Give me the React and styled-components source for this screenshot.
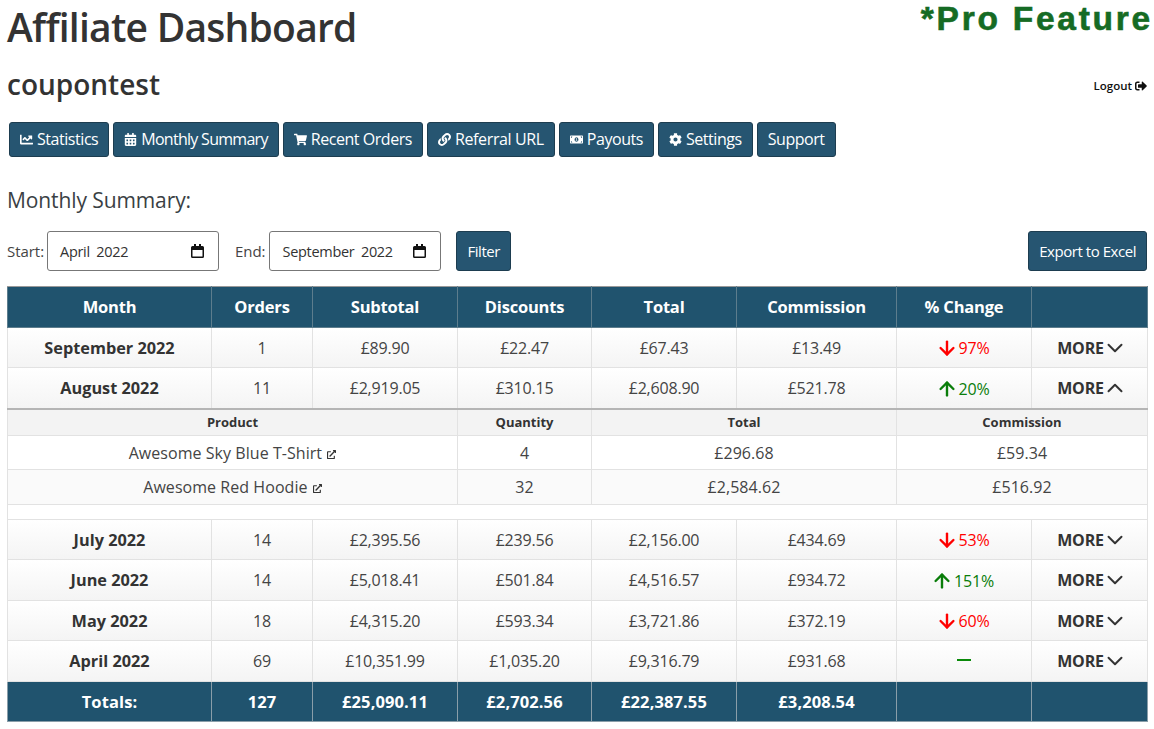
import React from "react";
import styled, { createGlobalStyle } from "styled-components";
import { FaChartLine, FaCalendarAlt, FaShoppingCart, FaLink, FaMoneyBillAlt, FaCog, FaSignOutAlt, FaExternalLinkAlt } from "react-icons/fa";
import { ArrowDown, ArrowUp, ChevronDown, ChevronUp } from "lucide-react";

const Global = createGlobalStyle`
  html, body { margin: 0; padding: 0; background: #fff; }
  body { font-family: "Open Sans", "Noto Sans", sans-serif; color: #333; font-size: 16px; }
  * { box-sizing: border-box; }
`;
const Page = styled.div`
  width: 1154px; height: 729px; overflow: hidden; padding: 0 7px;
`;
const TopRow = styled.div`
  display: flex; justify-content: space-between; align-items: flex-start; height: 63px;
`;
const Title = styled.h1`
  margin: 5px 0 0; font-size: 39px; line-height: 44px; font-weight: 600; letter-spacing: -0.76px; color: #333;
`;
const Pro = styled.div`
  font-family: "Liberation Sans", sans-serif; font-size: 33.5px; line-height: 37px; font-weight: 700; color: #156b24; letter-spacing: 2.75px; -webkit-text-stroke: 0.6px #156b24; margin: 0 -6px 0 0; white-space: nowrap;
`;
const UserRow = styled.div`
  display: flex; justify-content: space-between; align-items: center; height: 44px;
`;
const User = styled.h2`
  margin: 0 0 3px; font-size: 28px; line-height: 44px; font-weight: 600; color: #333;
`;
const Logout = styled.a`
  display: flex; align-items: center; gap: 3px; font-size: 11.5px; font-weight: 600; color: #111; margin-top: 1px;
  svg { width: 12px; height: 12px; }
`;
const Nav = styled.nav`
  display: flex; gap: 4px; margin: 15px 0 0 2px;
`;
const NavButton = styled.button`
  height: 35px; padding: 0 10px 2px; background: #265571; color: #fff; border: 1px solid #1d3d50; border-radius: 3px;
  font: 400 16px/1 "Open Sans", sans-serif; letter-spacing: ${(p) => p.$ls ?? -0.45}px; display: flex; align-items: center; gap: 4px;
  svg { height: 13px; width: auto; margin-top: 2px; }
`;
const Heading = styled.h3`
  margin: 30px 0 0; font-size: 21px; line-height: 27px; font-weight: 400; color: #3a3f44; letter-spacing: -0.1px;
`;
const FilterRow = styled.div`
  display: flex; align-items: center; height: 40px; margin-top: 17px;
`;
const FilterLabel = styled.label`
  font-size: 15px; color: #444; letter-spacing: -0.05px; margin-left: ${(p) => p.$left || 0}px; margin-right: ${(p) => p.$right || 3}px;
`;
const MonthField = styled.div`
  width: 172px; height: 40px; padding: 0 14px 0 12px; border: 1px solid #777; border-radius: 3px; background: #fff;
  display: flex; align-items: center; justify-content: space-between;
  font-size: 14.5px; color: #333; letter-spacing: -0.3px; word-spacing: 3px;
`;
const CalendarGlyph = styled.svg`
  width: 13px; height: 14px; flex: none; color: #111;
`;
const FilterButton = styled.button`
  height: 40px; padding: 0 10px; margin-left: 15px; background: #265571; color: #fff; border: 1px solid #1d3d50; border-radius: 3px;
  font: 400 15px "Open Sans", sans-serif; letter-spacing: -0.45px;
`;
const ExportButton = styled(FilterButton)`
  margin-left: auto;
`;
const Table = styled.table`
  width: 1140px; table-layout: fixed; border-collapse: collapse; margin-top: 15px; font-size: 16px; letter-spacing: -0.2px;
`;
const Head = styled.tr`
  height: 41px; background: #20536e; color: #fff;
  th { border: 1px solid #5d7d8d; border-top-color: #999; font-size: 16.5px; font-weight: 700; letter-spacing: -0.2px; padding: 0 0 2px; text-align: center; }
`;
const Row = styled.tr`
  height: ${(p) => p.$h}px; background: linear-gradient(#fff, #f4f4f4);
  td { border: 1px solid #e2e2e2; text-align: center; padding: 0; color: #444; }
`;
const MonthCell = styled.td`
  && { font-weight: 700; color: #333; font-size: 16.3px; letter-spacing: 0; }
`;
const ChangeInner = styled.span`
  display: inline-flex; align-items: center; gap: 2px; vertical-align: middle; color: ${(p) => p.$up ? "#0a7d0a" : "#f00"};
  svg { width: 22px; height: 22px; margin: 0 -1px 0 -3px; }
`;
const Dash = styled.span`
  display: inline-block; width: 14px; height: 2px; background: #0a8a0a; vertical-align: 6px;
`;
const More = styled.span`
  display: inline-flex; align-items: center; gap: 2px; vertical-align: middle; font-weight: 700; color: #333; font-size: 16px; letter-spacing: -0.2px;
  svg { width: 26px; height: 26px; margin: 0 -6px 0 -4px; }
`;
const SubHead = styled.tr`
  height: 27px; background: #f3f3f3;
  th { border: 1px solid #e2e2e2; border-top: 2px solid #b5b5b5; font-size: 13px; font-weight: 700; color: #333; padding: 0; letter-spacing: 0; text-align: center; }
`;
const SubRow = styled.tr`
  height: ${(p) => p.$h}px; background: ${(p) => p.$alt ? "#fafafa" : "#fff"};
  td { border: 1px solid #e2e2e2; text-align: center; padding: 0; color: #444; letter-spacing: 0.05px; }
  svg { width: 9px; height: 9px; margin-left: 1px; color: #333; }
`;
const Spacer = styled.tr`
  height: 15px; background: #fff;
  td { border: 1px solid #e2e2e2; padding: 0; }
`;
const Foot = styled.tr`
  height: 40px; background: #20536e; color: #fff;
  td { border: 1px solid #8a9ea9; font-size: 16.5px; font-weight: 700; text-align: center; padding: 0; letter-spacing: 0.1px; }
`;

const widths = [204, 101, 145, 134, 145, 160, 135, 116];
const Change = ({ v }) => v === 0 ? <Dash /> : (
  <ChangeInner $up={v > 0}>{v > 0 ? <ArrowUp strokeWidth={2.6} /> : <ArrowDown strokeWidth={2.6} />}{Math.abs(v)}%</ChangeInner>
);
const DataRow = ({ r, open, h }) => (
  <Row $h={h}>
    <MonthCell>{r[0]}</MonthCell>
    <td>{r[1]}</td><td>{r[2]}</td><td>{r[3]}</td><td>{r[4]}</td><td>{r[5]}</td>
    <td><Change v={r[6]} /></td>
    <td><More>MORE {open ? <ChevronUp strokeWidth={1.8} /> : <ChevronDown strokeWidth={1.8} />}</More></td>
  </Row>
);
const Calendar = () => (
  <CalendarGlyph viewBox="0 0 13 14">
    <path fill="currentColor" d="M3 0h2v2h3V0h2v2h1.5A1.5 1.5 0 0 1 13 3.5v9a1.5 1.5 0 0 1-1.5 1.5h-10A1.5 1.5 0 0 1 0 12.5v-9A1.5 1.5 0 0 1 1.5 2H3V0zM1.5 6v6.5h10V6h-10z" />
  </CalendarGlyph>
);

export default function App() {
  return (
    <Page>
      <Global />
      <TopRow>
        <Title>Affiliate Dashboard</Title>
        <Pro>*Pro Feature</Pro>
      </TopRow>
      <UserRow>
        <User>coupontest</User>
        <Logout>Logout <FaSignOutAlt /></Logout>
      </UserRow>
      <Nav>
        <NavButton><FaChartLine />Statistics</NavButton>
        <NavButton $ls={-0.72}><FaCalendarAlt />Monthly Summary</NavButton>
        <NavButton><FaShoppingCart />Recent Orders</NavButton>
        <NavButton $ls={-0.37}><FaLink />Referral URL</NavButton>
        <NavButton><FaMoneyBillAlt />Payouts</NavButton>
        <NavButton><FaCog />Settings</NavButton>
        <NavButton>Support</NavButton>
      </Nav>
      <Heading>Monthly Summary:</Heading>
      <FilterRow>
        <FilterLabel>Start:</FilterLabel>
        <MonthField><span>April 2022</span><Calendar /></MonthField>
        <FilterLabel $left={16} $right={4}>End:</FilterLabel>
        <MonthField><span>September 2022</span><Calendar /></MonthField>
        <FilterButton>Filter</FilterButton>
        <ExportButton>Export to Excel</ExportButton>
      </FilterRow>
      <Table>
        <colgroup>{widths.map((w, i) => <col key={i} style={{ width: w }} />)}</colgroup>
        <thead>
          <Head>
            <th>Month</th><th>Orders</th><th>Subtotal</th><th>Discounts</th><th>Total</th><th>Commission</th><th>% Change</th><th></th>
          </Head>
        </thead>
        <tbody>
          <DataRow h={40} r={["September 2022", "1", "£89.90", "£22.47", "£67.43", "£13.49", -97]} />
          <DataRow h={41} r={["August 2022", "11", "£2,919.05", "£310.15", "£2,608.90", "£521.78", 20]} open />
          <SubHead>
            <th colSpan={3}>Product</th><th>Quantity</th><th colSpan={2}>Total</th><th colSpan={2}>Commission</th>
          </SubHead>
          <SubRow $h={34}>
            <td colSpan={3}>Awesome Sky Blue T-Shirt <FaExternalLinkAlt /></td><td>4</td><td colSpan={2}>£296.68</td><td colSpan={2}>£59.34</td>
          </SubRow>
          <SubRow $h={35} $alt>
            <td colSpan={3}>Awesome Red Hoodie <FaExternalLinkAlt /></td><td>32</td><td colSpan={2}>£2,584.62</td><td colSpan={2}>£516.92</td>
          </SubRow>
          <Spacer><td colSpan={8}></td></Spacer>
          <DataRow h={40} r={["July 2022", "14", "£2,395.56", "£239.56", "£2,156.00", "£434.69", -53]} />
          <DataRow h={41} r={["June 2022", "14", "£5,018.41", "£501.84", "£4,516.57", "£934.72", 151]} />
          <DataRow h={40} r={["May 2022", "18", "£4,315.20", "£593.34", "£3,721.86", "£372.19", -60]} />
          <DataRow h={41} r={["April 2022", "69", "£10,351.99", "£1,035.20", "£9,316.79", "£931.68", 0]} />
        </tbody>
        <tfoot>
          <Foot>
            <td>Totals:</td><td>127</td><td>£25,090.11</td><td>£2,702.56</td><td>£22,387.55</td><td>£3,208.54</td><td></td><td></td>
          </Foot>
        </tfoot>
      </Table>
    </Page>
  );
}
